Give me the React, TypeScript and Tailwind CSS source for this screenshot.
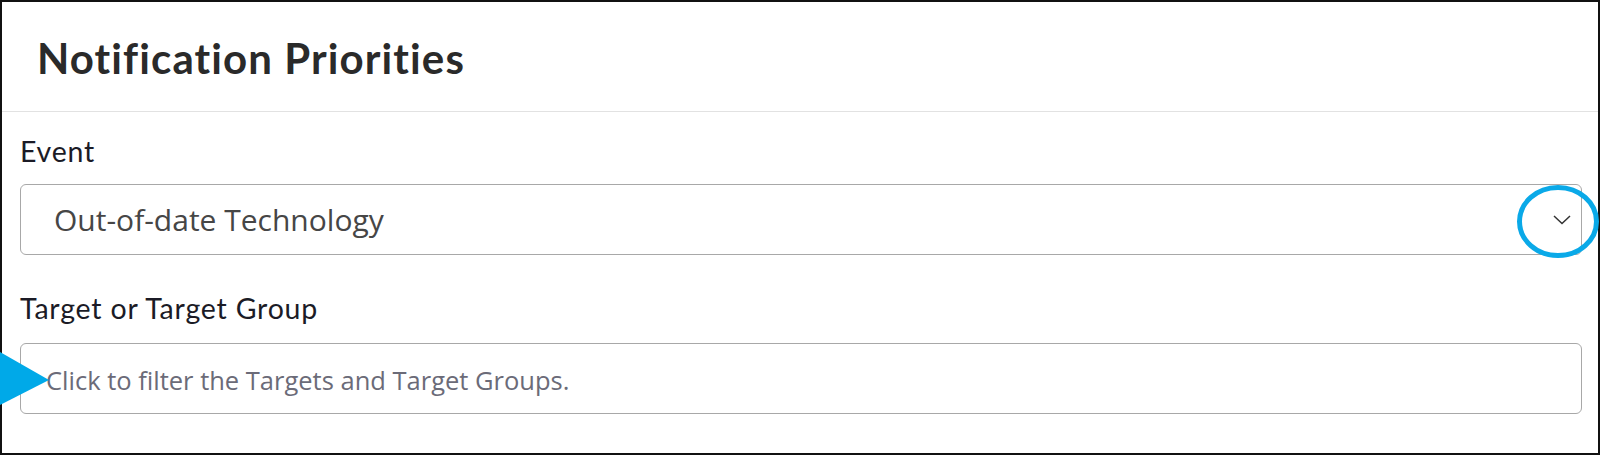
import React from "react";

export default function App() {
  return (
    <div className="relative w-[1600px] h-[455px] bg-white overflow-hidden">
      <div className="w-[1600px] h-[455px] border-2 border-[#111] bg-white flex flex-col">
        <div className="h-[110px] shrink-0 border-b border-[#e2e2e2] flex items-center pl-[35px] pt-[3px]">
          <h1 className="text-[42px] leading-[1.2] font-bold text-[#2a2a2a] font-['Lato',sans-serif] tracking-[1.1px]">
            Notification Priorities
          </h1>
        </div>
        <div className="pl-[18px] pr-[16px] flex flex-col">
          <label className="mt-[22px] text-[28.5px] leading-[1.2] text-[#1b1b26] font-['Lato',sans-serif] tracking-[0.8px]">
            Event
          </label>
          <div className="mt-[16px] h-[71px] border border-[#a8a8a8] rounded-[6px] flex items-center justify-between pl-[33px] pr-[10px]">
            <span className="text-[30px] leading-[1.362] text-[#464646] font-['Open_Sans',sans-serif] pt-[2px]">
              Out-of-date Technology
            </span>
            <svg width="18" height="10" viewBox="0 0 18 10">
              <polyline points="1,1 9,8.5 17,1" fill="none" stroke="#333" strokeWidth="1.5" />
            </svg>
          </div>
          <label className="mt-[36px] text-[28.5px] leading-[1.2] text-[#1b1b26] font-['Lato',sans-serif] tracking-[0.8px]">
            Target or Target Group
          </label>
          <div className="mt-[18px] h-[71px] border border-[#a8a8a8] rounded-[6px] flex items-center pl-[25px]">
            <span className="text-[25.5px] leading-[1.362] text-[#6b6b78] font-['Open_Sans',sans-serif] pt-[2px]">
              Click to filter the Targets and Target Groups.
            </span>
          </div>
        </div>
      </div>
      <svg
        className="absolute left-0 top-0 pointer-events-none"
        width="1600"
        height="455"
        viewBox="0 0 1600 455"
      >
        <ellipse cx="1558" cy="221.5" rx="38.5" ry="34" fill="none" stroke="#0aa9e8" strokeWidth="5" />
        <polygon points="0,352 49,380 0,405" fill="#00a9e8" />
      </svg>
    </div>
  );
}
